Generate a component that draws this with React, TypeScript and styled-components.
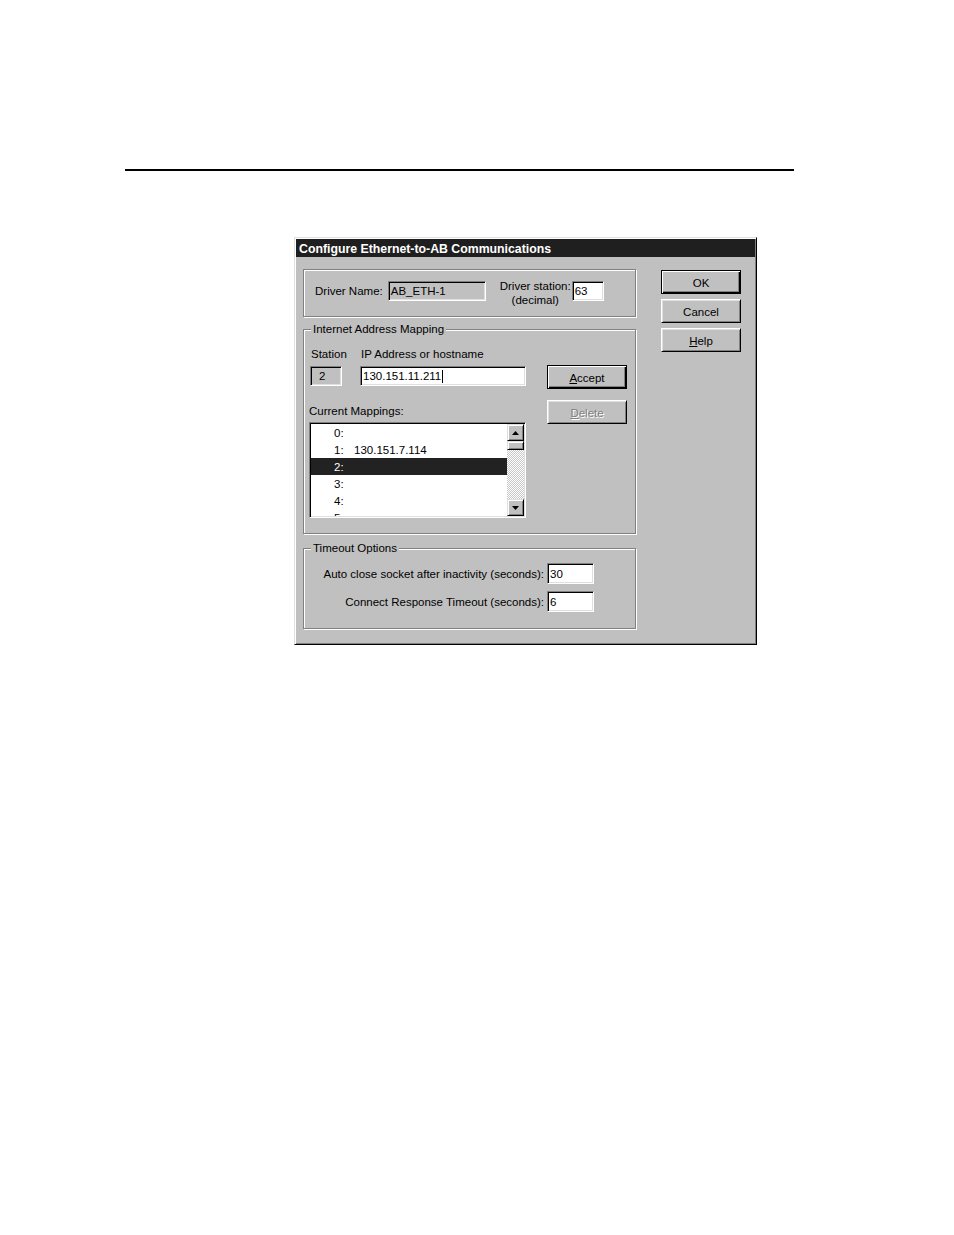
import React from "react"
import styled, { createGlobalStyle, css } from "styled-components"

const GlobalStyle = createGlobalStyle`
  html, body {
    margin: 0;
    padding: 0;
    background: #fff;
  }
  body {
    font-family: "Liberation Sans", Arial, sans-serif;
    font-size: 11.5px;
    color: #000;
  }
  * {
    box-sizing: border-box;
  }
`

const Page = styled.div`
  width: 954px;
  height: 1235px;
  padding: 169px 0 0 125px;
`

const Rule = styled.div`
  width: 669px;
  height: 2px;
  background: #000;
`

const Dialog = styled.div`
  display: flex;
  flex-direction: column;

  width: 463px;
  height: 408px;
  margin: 66px 0 0 169px;
  padding: 1px;

  background: #c0c0c0;
  border: 1px solid;
  border-color: #dfdfdf #000 #000 #dfdfdf;
  box-shadow: inset 1px 1px 0 #fff, inset -1px -1px 0 #808080;
`

const TitleBar = styled.div`
  height: 18px;
  padding: 2px 0 0 3px;

  background: #1f1f1f;
  color: #fff;
  font-size: 12.3px;
  font-weight: 700;
  line-height: 16px;
  white-space: nowrap;
`

const Body = styled.div`
  display: flex;
  gap: 25px;

  padding: 12px 12px 0 7px;
`

const LeftColumn = styled.div`
  display: flex;
  flex-direction: column;

  width: 333px;
`

const ButtonColumn = styled.div<{ $top?: number; $gap?: number }>`
  display: flex;
  flex-direction: column;
  gap: ${(p) => p.$gap ?? 5}px;

  margin-top: ${(p) => p.$top ?? 0}px;
`

const Group = styled.div<{ $height: number; $gapAbove?: number }>`
  position: relative;

  height: ${(p) => p.$height}px;
  margin-top: ${(p) => p.$gapAbove ?? 0}px;

  border: 1px solid #808080;
  box-shadow: 1px 1px 0 #fff, inset 1px 1px 0 #fff;
`

const Caption = styled.span`
  position: absolute;
  top: -8px;
  left: 7px;

  padding: 0 2px;
  background: #c0c0c0;
  line-height: 14px;
  white-space: nowrap;
`

const DriverRow = styled.div`
  display: flex;
  align-items: center;

  height: 20px;
  margin: 11px 0 0 11px;
`

const Text = styled.span`
  line-height: 14px;
  white-space: nowrap;
`

const StationCaption = styled.div`
  margin: 4px 1px 0 14px;

  line-height: 14px;
  text-align: center;
  white-space: nowrap;
`

const Field = styled.div<{ $w: number; $h?: number; $grey?: boolean }>`
  display: flex;
  align-items: center;
  flex-shrink: 0;

  width: ${(p) => p.$w}px;
  height: ${(p) => p.$h ?? 20}px;
  padding: 0 1px 0 2px;

  background: ${(p) => (p.$grey ? "#c0c0c0" : "#fff")};
  border: 1px solid;
  border-color: #808080 #fff #fff #808080;
  box-shadow: inset 1px 1px 0 #000, inset -1px -1px 0 #dfdfdf;

  white-space: nowrap;
  overflow: hidden;
`

const Caret = styled.span`
  display: inline-block;
  width: 1px;
  height: 13px;
  margin-left: 1px;
  background: #000;
`

const MappingContent = styled.div`
  display: flex;
  gap: 21px;

  padding: 17px 0 0 5px;
`

const MappingLeft = styled.div`
  display: flex;
  flex-direction: column;

  width: 217px;
`

const LabelRow = styled.div`
  display: flex;

  padding-left: 2px;
  line-height: 14px;
`

const StationLabel = styled.span`
  width: 50px;
`

const InputRow = styled.div`
  display: flex;
  gap: 18px;

  margin-top: 5px;
  padding-left: 1px;
`

const ListLabel = styled.div`
  margin-top: 18px;
  line-height: 14px;
`

const ListBox = styled.div`
  display: flex;

  height: 96px;
  margin-top: 4px;
  padding: 1px;

  background: #fff;
  border: 1px solid;
  border-color: #808080 #fff #fff #808080;
  box-shadow: inset 1px 1px 0 #000, inset -1px -1px 0 #dfdfdf;
`

const Items = styled.div`
  flex: 1;
  overflow: hidden;
`

const Item = styled.div<{ $selected?: boolean }>`
  display: flex;
  align-items: center;

  height: 17px;
  padding-left: 23px;

  background: ${(p) => (p.$selected ? "#222" : "transparent")};
  color: ${(p) => (p.$selected ? "#fff" : "#000")};
  white-space: nowrap;
`

const ItemIndex = styled.span`
  width: 20px;
`

const ScrollBar = styled.div`
  display: flex;
  flex-direction: column;

  width: 17px;
`

const raised = css`
  background: #c0c0c0;
  border: 1px solid;
  border-color: #dfdfdf #000 #000 #dfdfdf;
  box-shadow: inset 1px 1px 0 #fff, inset -1px -1px 0 #808080;
`

const ArrowButton = styled.div`
  ${raised}
  display: flex;
  align-items: center;
  justify-content: center;

  width: 17px;
  height: 17px;
`

const Thumb = styled.div`
  ${raised}
  height: 9px;
`

const Track = styled.div`
  flex: 1;

  background-color: #d8d8d8;
  background-image: conic-gradient(#fff 25%, #c8c8c8 0 50%, #fff 0 75%, #c8c8c8 0);
  background-size: 2px 2px;
`

const Button = styled.button<{ $default?: boolean; $disabled?: boolean }>`
  width: 80px;
  height: 24px;
  padding: 1px 0 0;

  font-family: "Liberation Sans", Arial, sans-serif;
  font-size: 11.5px;
  color: ${(p) => (p.$disabled ? "#808080" : "#000")};
  text-shadow: ${(p) => (p.$disabled ? "1px 1px 0 #fff" : "none")};

  background: #c0c0c0;
  border: 1px solid;
  border-color: ${(p) => (p.$default ? "#000" : "#fff #000 #000 #fff")};
  box-shadow: ${(p) =>
    p.$default
      ? "inset 1px 1px 0 #fff, inset -1px -1px 0 #000, inset -2px -2px 0 #808080"
      : "inset 1px 1px 0 #dfdfdf, inset -1px -1px 0 #808080"};
`

const TimeoutGrid = styled.div`
  display: grid;
  grid-template-columns: max-content 47px;
  justify-content: end;
  align-items: center;
  column-gap: 3px;
  row-gap: 7px;

  padding: 14px 41px 0 0;
`

const RightText = styled.span`
  line-height: 14px;
  text-align: right;
  white-space: nowrap;
`

const Arrow: React.FC<{ down?: boolean }> = ({ down }) => (
  <svg width="7" height="4" viewBox="0 0 7 4">
    <polygon points={down ? "0,0 7,0 3.5,4" : "3.5,0 7,4 0,4"} fill="#000" />
  </svg>
)

const mappings = [
  { index: 0, address: "" },
  { index: 1, address: "130.151.7.114" },
  { index: 2, address: "" },
  { index: 3, address: "" },
  { index: 4, address: "" },
  { index: 5, address: "" },
]

const App: React.FC = () => {
  return (
    <Page>
      <GlobalStyle />
      <Rule />
      <Dialog>
        <TitleBar>Configure Ethernet-to-AB Communications</TitleBar>
        <Body>
          <LeftColumn>
            <Group $height={48}>
              <DriverRow>
                <Text>Driver Name:</Text>
                <Field $w={98} $grey style={{ marginLeft: 5 }}>
                  AB_ETH-1
                </Field>
                <StationCaption>
                  Driver station:
                  <br />
                  (decimal)
                </StationCaption>
                <Field $w={32}>63</Field>
              </DriverRow>
            </Group>

            <Group $height={205} $gapAbove={12}>
              <Caption>Internet Address Mapping</Caption>
              <MappingContent>
                <MappingLeft>
                  <LabelRow>
                    <StationLabel>Station</StationLabel>
                    <span>IP Address or hostname</span>
                  </LabelRow>
                  <InputRow>
                    <Field $w={32} $grey style={{ paddingLeft: 8 }}>
                      2
                    </Field>
                    <Field $w={166}>
                      130.151.11.211
                      <Caret />
                    </Field>
                  </InputRow>
                  <ListLabel>Current Mappings:</ListLabel>
                  <ListBox>
                    <Items>
                      {mappings.map((m) => (
                        <Item key={m.index} $selected={m.index === 2}>
                          <ItemIndex>{m.index}:</ItemIndex>
                          <span>{m.address}</span>
                        </Item>
                      ))}
                    </Items>
                    <ScrollBar>
                      <ArrowButton>
                        <Arrow />
                      </ArrowButton>
                      <Thumb />
                      <Track />
                      <ArrowButton>
                        <Arrow down />
                      </ArrowButton>
                    </ScrollBar>
                  </ListBox>
                </MappingLeft>
                <ButtonColumn $top={18} $gap={11}>
                  <Button $default>
                    <u>A</u>ccept
                  </Button>
                  <Button $disabled>
                    <u>D</u>elete
                  </Button>
                </ButtonColumn>
              </MappingContent>
            </Group>

            <Group $height={81} $gapAbove={14}>
              <Caption>Timeout Options</Caption>
              <TimeoutGrid>
                <RightText>Auto close socket after inactivity (seconds):</RightText>
                <Field $w={47} $h={21}>
                  30
                </Field>
                <RightText>Connect Response Timeout (seconds):</RightText>
                <Field $w={47} $h={21}>
                  6
                </Field>
              </TimeoutGrid>
            </Group>
          </LeftColumn>

          <ButtonColumn $top={1}>
            <Button $default>OK</Button>
            <Button>Cancel</Button>
            <Button>
              <u>H</u>elp
            </Button>
          </ButtonColumn>
        </Body>
      </Dialog>
    </Page>
  )
}

export default App
